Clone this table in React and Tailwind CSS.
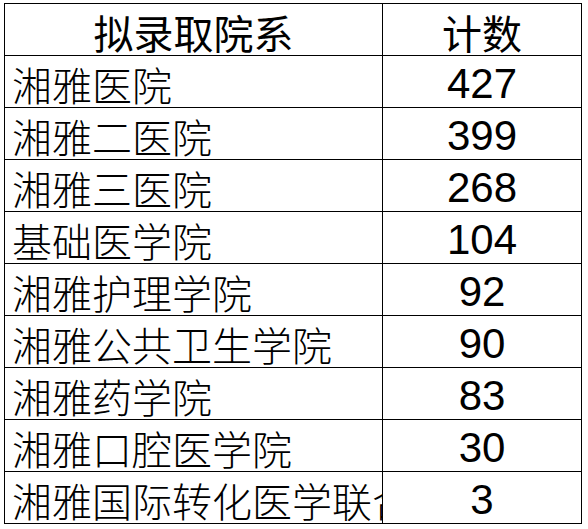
import React from "react";

const rows = [
  ["湘雅医院", "427"],
  ["湘雅二医院", "399"],
  ["湘雅三医院", "268"],
  ["基础医学院", "104"],
  ["湘雅护理学院", "92"],
  ["湘雅公共卫生学院", "90"],
  ["湘雅药学院", "83"],
  ["湘雅口腔医学院", "30"],
  ["湘雅国际转化医学联合研究院", "3"],
];

export default function App() {
  return (
    <div className="w-[588px] h-[529px] bg-white overflow-hidden pl-[4px] pt-[3px]">
      <div className="grid grid-cols-[378px_199px] border-l border-t border-black w-[578px]">
        <div className="h-[52px] border-r border-b border-black text-center pt-[5px] text-[40px] leading-[46px] text-black font-normal font-['Noto_Sans_CJK_SC',sans-serif]">
          拟录取院系
        </div>
        <div className="h-[52px] border-r border-b border-black text-center pt-[5px] text-[40px] leading-[46px] text-black font-normal font-['Noto_Sans_CJK_SC',sans-serif]">
          计数
        </div>
        {rows.map(([name, count]) => (
          <React.Fragment key={name}>
            <div className="h-[52px] border-r border-b border-black pl-[7px] pt-[5px] overflow-hidden whitespace-nowrap text-[40px] leading-[46px] text-black font-light font-['Noto_Sans_CJK_SC',sans-serif]">
              {name}
            </div>
            <div className="h-[52px] border-r border-b border-black text-center pt-[4px] text-[42px] leading-[47px] text-black font-['Liberation_Sans',Arial,sans-serif]">
              {count}
            </div>
          </React.Fragment>
        ))}
      </div>
    </div>
  );
}
